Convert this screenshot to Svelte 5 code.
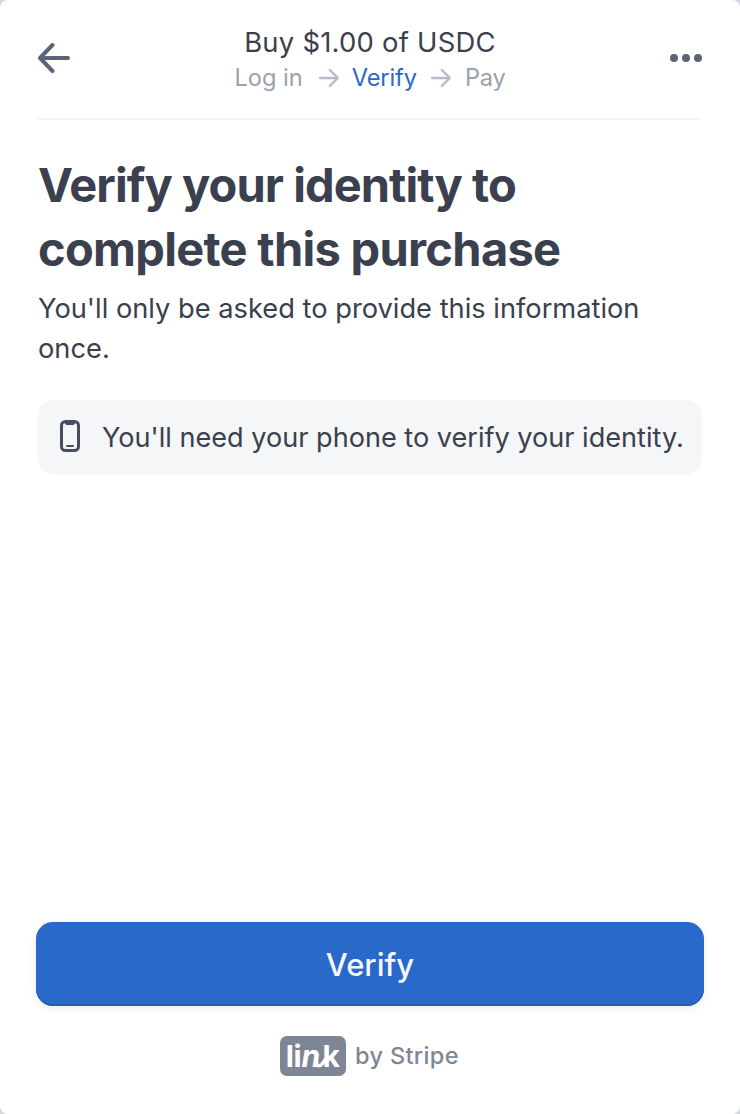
<script>
  const steps = [
    { label: 'Log in', active: false },
    { label: 'Verify', active: true },
    { label: 'Pay', active: false }
  ];
</script>

<main class="sheet">
  <header>
    <button class="icon" aria-label="Back">
      <svg width="32" height="32" viewBox="0 0 32 32" fill="none" stroke="#5b6578" stroke-width="4" stroke-linecap="round" stroke-linejoin="round">
        <path d="M30 16H2.5M14.5 3L2 16L14.5 29" />
      </svg>
    </button>
    <div class="title">
      <p class="amount">Buy $1.00 of USDC</p>
      <nav>
        {#each steps as step, i}
          {#if i > 0}
            <svg width="20" height="18" viewBox="0 0 20 18" fill="none" stroke="#b5bdc8" stroke-width="2.4" stroke-linecap="round" stroke-linejoin="round">
              <path d="M1.2 9H18.5M11 1.2L18.8 9L11 16.8" />
            </svg>
          {/if}
          <span class:active={step.active}>{step.label}</span>
        {/each}
      </nav>
    </div>
    <button class="icon" aria-label="More options">
      <svg width="32" height="32" viewBox="0 0 32 32" fill="#5b6578">
        <circle cx="4" cy="16" r="4" /><circle cx="16" cy="16" r="4" /><circle cx="28" cy="16" r="4" />
      </svg>
    </button>
  </header>

  <section>
    <h1>Verify your identity to<br /><span>complete this purchase</span></h1>
    <p class="lead">You'll only be asked to provide this information once.</p>
    <div class="note">
      <svg width="20" height="32" viewBox="0 0 20 32" fill="none">
        <rect x="1.5" y="1.5" width="17" height="29" rx="4" stroke="#474e5f" stroke-width="3" />
        <path d="M4 2H16L14.5 4.2Q14 5 13 5H7Q6 5 5.5 4.2Z" fill="#474e5f" />
        <path d="M7 26H13" stroke="#474e5f" stroke-width="2" stroke-linecap="round" />
      </svg>
      <span>You'll need your phone to verify your identity.</span>
    </div>
  </section>

  <footer>
    <button class="primary">Verify</button>
    <div class="brand">
      <svg width="66" height="40" viewBox="0 0 66 40">
        <rect width="66" height="40" rx="7" fill="#7e8696" />
        <text y="31" class="wordmark"><tspan x="5.8">l</tspan><tspan x="13.6">i</tspan><tspan x="21.6" font-style="italic">n</tspan><tspan x="42.4">k</tspan></text>
        <path d="M37 25.5C35.8 31 40 30.8 42.5 27.5L46 22.5" fill="none" stroke="#fff" stroke-width="3.4" />
      </svg>
      <span>by Stripe</span>
    </div>
  </footer>
</main>

<style>
  :global(body) { background: #d3d8de; }
  * { box-sizing: border-box; }
  .sheet {
    display: flex;
    flex-direction: column;
    width: 740px;
    height: 1114px;
    padding: 0 36px;
    border-radius: 8px;
    background: #fff;
    color: #3a404d;
    font-family: Inter, "Liberation Sans", sans-serif;
  }
  button { border: 0; padding: 0; background: none; font-family: inherit; }
  p, h1 { margin: 0; }
  svg { display: block; flex: none; }
  header {
    display: flex;
    justify-content: space-between;
    height: 120px;
    margin: 0 2px;
    padding-top: 24px;
    border-bottom: 2px solid #f1f5fd;
  }
  .icon { align-self: flex-start; padding-top: 18px; }
  .title { display: flex; flex-direction: column; align-items: center; }
  .amount { font-size: 27.4px; line-height: 36px; letter-spacing: .25px; font-weight: 430; }
  nav { display: flex; align-items: center; height: 36px; font-size: 23.6px; line-height: 36px; color: #99a2b1; }
  nav svg { margin: 0 13px 0 16px; }
  nav .active { color: #2869ca; letter-spacing: -.1px; }
  nav .active + svg { margin-right: 14px; margin-left: 14px; }
  nav span:last-child { letter-spacing: -.2px; }
  section { flex: 1; padding: 33px 2px 0; }
  h1 { font-size: 47px; line-height: 64px; font-weight: 700; letter-spacing: -.93px; white-space: nowrap; }
  h1 span { letter-spacing: -.7px; }
  .lead { margin-top: 7px; padding-top: 1px; font-size: 27.25px; line-height: 40px; }
  .note {
    display: flex;
    align-items: center;
    height: 74px;
    margin-top: 31px;
    padding: 0 22px;
    border-radius: 16px;
    background: #f5f6f8;
    font-size: 27.1px;
    white-space: nowrap;
  }
  .note svg { margin-bottom: 2px; }
  .note span { margin-left: 22px; padding-top: 1px; }
  footer { height: 192px; }
  .primary {
    display: block;
    width: 668px;
    height: 84px;
    border-radius: 17px;
    background: #2869ca;
    box-shadow: inset 0 -2px 0 #245db5, 0 2px 8px rgba(0, 0, 0, .08);
    color: #f5f8fd;
    font-size: 31px;
    font-weight: 540;
    padding-top: 1px;
  }
  .brand {
    display: flex;
    align-items: center;
    margin: 30px 0 0 244px;
    color: #7e8696;
    font-size: 23.5px;
    font-weight: 500;
    letter-spacing: .35px;
  }
  .brand span { margin-left: 9px; margin-top: -1px; }
  .wordmark { fill: #fff; font-family: Inter, sans-serif; font-size: 30px; font-weight: 650; letter-spacing: 0; }
</style>
